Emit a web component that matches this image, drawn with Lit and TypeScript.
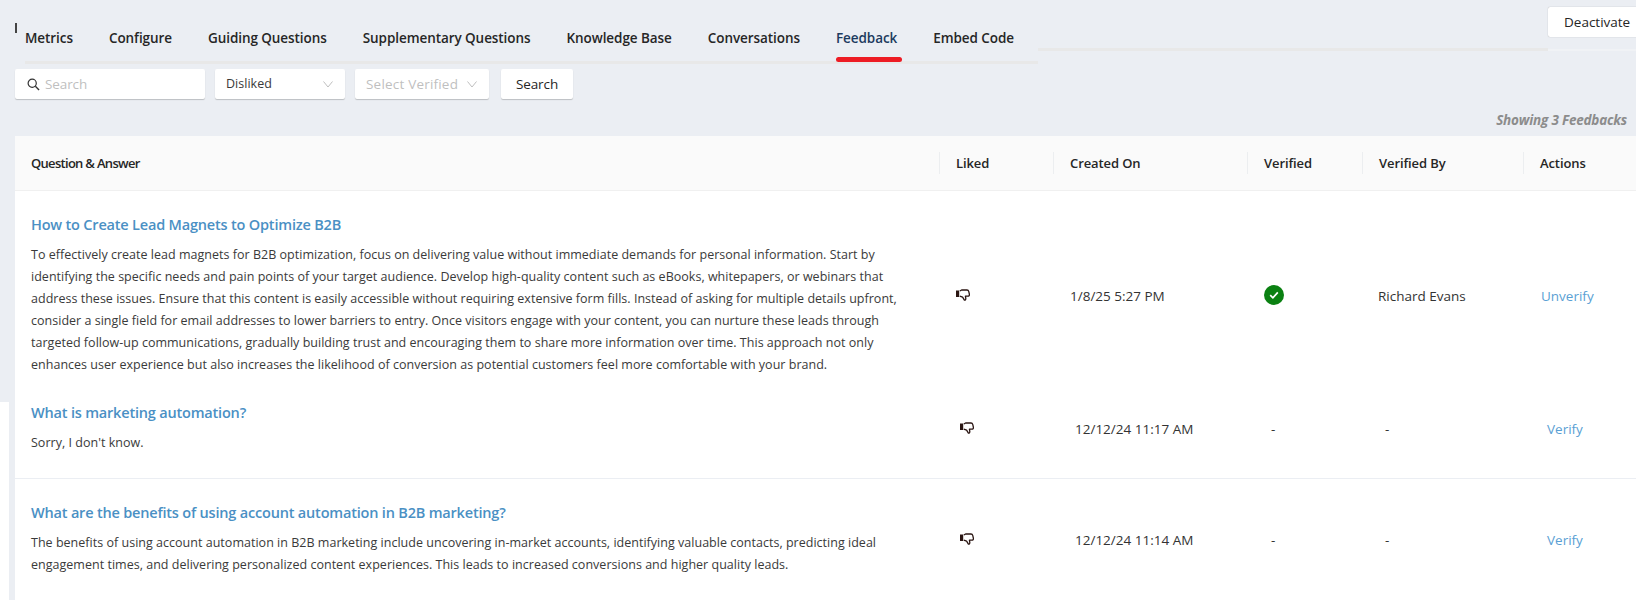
import { LitElement, html, css, svg } from "lit";
import { customElement } from "lit/decorators.js";

const thumb = svg`<svg class="thumb" viewBox="0 0 14 12" width="14" height="12"><rect x="0" y="1.5" width="3.2" height="6.5" fill="#2a1512"/><path d="M3.8 2 L5.6 1 H11 Q12.4 1 12.8 2.6 L13.4 5.4 Q13.5 7.2 11.8 7.2 H9.4 L9.8 9.4 Q9.8 11.4 8.4 11.2 L6.6 8.2 L3.8 7.2" fill="none" stroke="#2a1512" stroke-width="1.3" stroke-linejoin="round"/></svg>`;
const chevron = svg`<svg viewBox="0 0 10 7" width="10" height="7"><path d="M0.5 0.5 L5 6 L9.5 0.5" fill="none" stroke="#bfbfbf" stroke-width="1"/></svg>`;
const searchIcon = svg`<svg viewBox="0 0 14 14" width="13" height="13"><circle cx="5.6" cy="5.6" r="4.4" fill="none" stroke="#333" stroke-width="1.3"/><path d="M9 9 L13 13" stroke="#333" stroke-width="1.5"/></svg>`;
const check = svg`<svg class="check" viewBox="0 0 20 20" width="20" height="20"><circle cx="10" cy="10" r="10" fill="#0b8112"/><path d="M6.2 10.2 L8.9 12.8 L13.8 7.4" fill="none" stroke="#fff" stroke-width="1.7"/></svg>`;

const tabs = ["Metrics","Configure","Guiding Questions","Supplementary Questions","Knowledge Base","Conversations","Feedback","Embed Code"];

const rows = [
  { q: "How to Create Lead Magnets to Optimize B2B", cls: "r1", alt: false, lines: [
    "To effectively create lead magnets for B2B optimization, focus on delivering value without immediate demands for personal information. Start by",
    "identifying the specific needs and pain points of your target audience. Develop high-quality content such as eBooks, whitepapers, or webinars that",
    "address these issues. Ensure that this content is easily accessible without requiring extensive form fills. Instead of asking for multiple details upfront,",
    "consider a single field for email addresses to lower barriers to entry. Once visitors engage with your content, you can nurture these leads through",
    "targeted follow-up communications, gradually building trust and encouraging them to share more information over time. This approach not only",
    "enhances user experience but also increases the likelihood of conversion as potential customers feel more comfortable with your brand."],
    date: "1/8/25 5:27 PM", verified: true, by: "Richard Evans", action: "Unverify" },
  { q: "What is marketing automation?", cls: "r2", alt: true, lines: ["Sorry, I don't know."], date: "12/12/24 11:17 AM", verified: false, by: "-", action: "Verify" },
  { q: "What are the benefits of using account automation in B2B marketing?", cls: "r3", alt: true, lines: [
    "The benefits of using account automation in B2B marketing include uncovering in-market accounts, identifying valuable contacts, predicting ideal",
    "engagement times, and delivering personalized content experiences. This leads to increased conversions and higher quality leads."],
    date: "12/12/24 11:14 AM", verified: false, by: "-", action: "Verify" },
];

@customElement("app-root")
export class AppRoot extends LitElement {
  static styles = css`
    :host { display: block; width: 1636px; height: 605px; overflow: hidden; background: #fff; font-family: "Open Sans", "Noto Sans", sans-serif; font-size: 13px; color: #262626; }
    .page { height: 600px; background: #ebeef3; position: relative; }
    .mark { position: absolute; left: 15px; top: 23px; width: 2px; height: 10px; background: #444; }
    .strip { position: absolute; left: 0; top: 402px; width: 9px; height: 198px; background: #fff; }
    .top { display: flex; align-items: flex-start; padding-left: 25px; height: 69px; box-sizing: border-box; }
    .tabs { display: flex; width: 1013px; height: 64px; flex: none; box-sizing: border-box; border-bottom: 3px solid #e8e8e8; padding-top: 27px; }
    .tab { margin-right: 36px; font-weight: 600; font-size: 13.5px; letter-spacing: -0.07px; line-height: 22px; height: 34px; color: #262626; white-space: nowrap; box-sizing: border-box; position: relative; }
    .tab.on { color: #1c3b5e; }
    .tab.on::after { content: ""; position: absolute; left: 0; width: 66px; top: 30px; height: 5px; border-radius: 3px; background: #ed1c24; }
    .topline { flex: 1; height: 51px; box-sizing: border-box; border-bottom: 3px solid #e8e8e8; }
    .topend { width: 88px; flex: none; height: 51px; box-sizing: border-box; padding-top: 7px; border-bottom: 2px solid #f0f2f5; }
    .deact { display: block; width: 110px; height: 30px; padding: 0 0 0 16px; border: 0; text-align: left; box-sizing: border-box; background: #fff; border-radius: 2px; box-shadow: 0 0 1px rgba(0,0,0,.35); font-family: inherit; font-size: 13.5px; color: #262626; white-space: nowrap; }
    .filters { display: flex; gap: 10px; padding-left: 15px; height: 30px; }
    .box { height: 30px; box-sizing: border-box; background: #fff; border-radius: 2px; box-shadow: 0 1px 1px rgba(0,0,0,.2); display: flex; align-items: center; font-size: 13.5px; white-space: nowrap; letter-spacing: -0.1px; }
    .search-in { width: 190px; padding-left: 12px; gap: 5px; color: #bfbfbf; }
    .sel { justify-content: space-between; padding: 0 12px 0 11px; }
    .sel.a { width: 130px; }
    .sel.b { width: 134px; color: #bfbfbf; letter-spacing: 0.2px; }
    .btn { width: 72px; margin-left: 2px; justify-content: center; }
    .showing { height: 37px; box-sizing: border-box; padding: 12px 9px 0 0; text-align: right; font-style: italic; font-weight: 700; font-size: 13.5px; letter-spacing: -0.2px; line-height: 18px; color: #8c8c8c; }
    .table { margin-left: 15px; background: #fff; height: 464px; }
    .grid { display: grid; }
    .head { grid-template-columns: 924px 114px 194px 115px 161px 113px; height: 55px; background: #fafafa; border-bottom: 1px solid #f0f0f0; box-sizing: border-box; align-items: center; font-weight: 600; letter-spacing: -0.1px; font-size: 13px; }
    .head > div { padding-left: 16px; height: 22px; line-height: 22px; border-left: 1px solid #eceef0; }
    .head > .first { border-left: none; letter-spacing: -0.7px; }
    .row { grid-template-columns: 925px 114px 194px 114px 163px 112px; box-sizing: border-box; align-items: start; font-size: 13.5px; }
    .alt { grid-template-columns: 929px 115px 196px 114px 162px 102px; }
    .r1 { height: 194px; }
    .r2 { height: 94px; border-bottom: 1px solid #ebeef3; }
    .r3 { height: 121px; }
    .qa { padding-left: 16px; }
    .q { font-size: 14.5px; font-weight: 600; line-height: 22px; letter-spacing: -0.19px; color: #4a90c4; margin-bottom: 8px; white-space: nowrap; }
    .a { font-size: 12.5px; line-height: 22px; letter-spacing: 0.02px; color: #3a3a3a; white-space: nowrap; }
    .r1 .qa { padding-top: 23px; }
    .r2 .qa { padding-top: 17px; }
    .r3 .qa { padding-top: 23px; }
    .cell { display: flex; align-items: center; height: 22px; white-space: nowrap; color: #333; padding-left: 16px; }
    .r1 .cell { margin-top: 94px; }
    .r2 .cell { margin-top: 33px; }
    .r3 .cell { margin-top: 50px; }
    .thumb { display: block; margin-top: -2px; }
    .check { display: block; margin-top: -2px; }
    .link { color: #5a9fd4; }
  `;

  render() {
    return html`<div class="page">
      <span class="mark"></span>
      <span class="strip"></span>
      <div class="top">
        <nav class="tabs">${tabs.map(t => html`<div class="tab ${t === "Feedback" ? "on" : ""}">${t}</div>`)}</nav>
        <div class="topline"></div>
        <div class="topend"><button class="deact">Deactivate</button></div>
      </div>
      <div class="filters">
        <div class="box search-in">${searchIcon}<span>Search</span></div>
        <div class="box sel a"><span>Disliked</span>${chevron}</div>
        <div class="box sel b"><span>Select Verified</span>${chevron}</div>
        <div class="box btn">Search</div>
      </div>
      <div class="showing">Showing 3 Feedbacks</div>
      <div class="table">
        <div class="grid head"><div class="first">Question &amp; Answer</div><div>Liked</div><div>Created On</div><div>Verified</div><div>Verified By</div><div>Actions</div></div>
        ${rows.map(r => html`<div class="grid row ${r.cls} ${r.alt ? "alt" : ""}">
          <div class="qa"><div class="q">${r.q}</div>${r.lines.map(l => html`<div class="a">${l}</div>`)}</div>
          <div class="cell">${thumb}</div>
          <div class="cell">${r.date}</div>
          <div class="cell">${r.verified ? check : "-"}</div>
          <div class="cell">${r.by}</div>
          <div class="cell link">${r.action}</div>
        </div>`)}
      </div>
    </div>`;
  }
}
